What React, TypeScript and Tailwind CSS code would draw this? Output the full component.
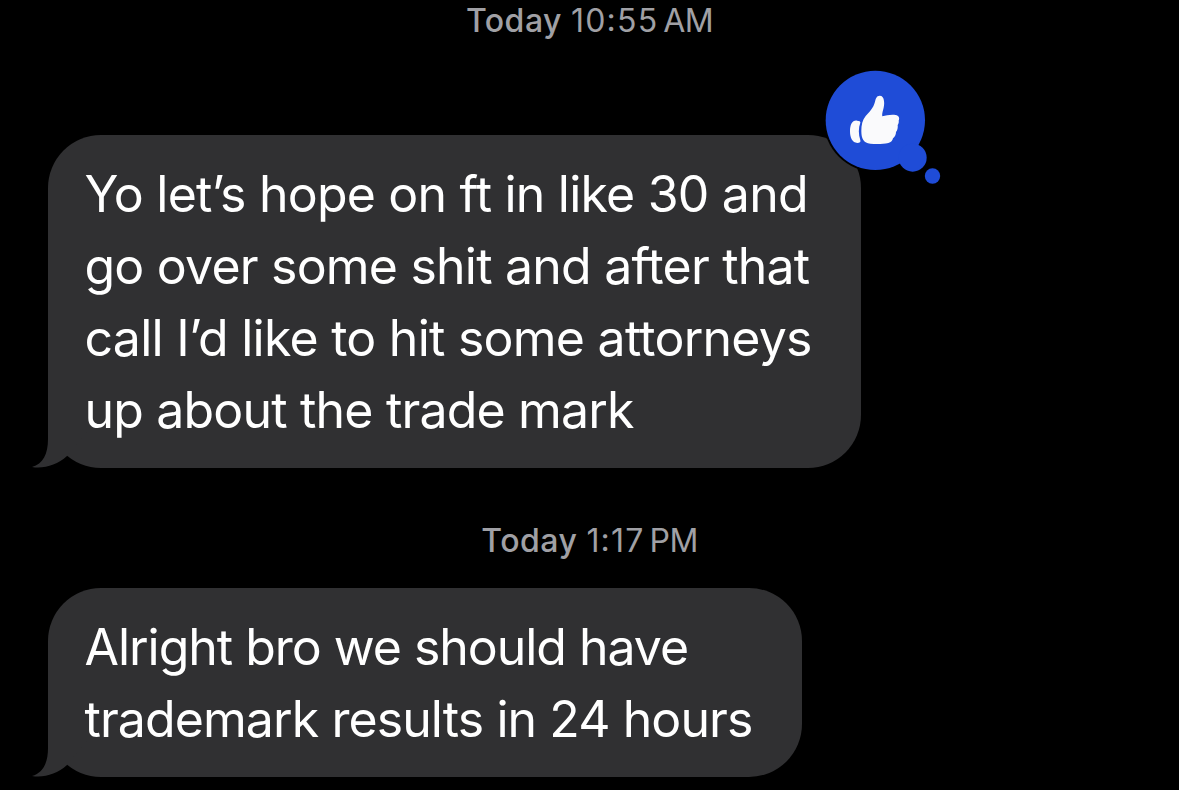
import { ReactNode } from "react";
import clsx from "clsx";

type Line = { text: string; spacing: string }

const firstMessage: Line[] = [
  { text: "Yo let’s hope on ft in like 30 and", spacing: "tracking-[-0.78px]" },
  { text: "go over some shit and after that", spacing: "tracking-[-0.79px]" },
  { text: "call I’d like to hit some attorneys", spacing: "tracking-[-0.75px]" },
  { text: "up about the trade mark", spacing: "tracking-[-0.82px]" },
]

const secondMessage: Line[] = [
  { text: "Alright bro we should have", spacing: "tracking-[-1.03px]" },
  { text: "trademark results in 24 hours", spacing: "tracking-[-0.91px]" },
]

type TimestampProps = {
  day: string
  hour: string
  minute: string
  period: string
  className?: string
}

const Timestamp = ({ day, hour, minute, period, className }: TimestampProps) => (
  <div className={clsx("flex h-10 items-center justify-center whitespace-nowrap text-[32px] leading-10 text-[#a0a0a5]", className)}>
    <span className="mr-[9px] font-medium tracking-[0.5px]">{day}</span>
    <span className="mr-[5px] tracking-[1.2px]">
      {hour}
      <span className="relative -top-px">:</span>
      {minute}
    </span>
    <span className="tracking-[-0.6px]">{period}</span>
  </div>
)

const Tail = () => (
  <svg className="absolute bottom-0 -left-4 h-[53px] w-[70px]" viewBox="0 0 70 53" fill="#303032">
    <path d="M16 0V24C16 39 11 49 0 52C12 54 25 50 35 41L69 0Z" />
  </svg>
)

const ThumbsUp = () => (
  <svg className="absolute -top-[75px] -right-[99px] h-[140px] w-[150px]" viewBox="0 0 450 420">
    <circle cx="196" cy="181" r="155" fill="#000" />
    <g fill="#1f4cd7">
      <circle cx="196" cy="181" r="149" />
      <circle cx="308" cy="293" r="42" />
      <circle cx="367.5" cy="348" r="23" />
    </g>
    <g fill="#fafafc">
      <path d="M141 182C127 180 120 194 120 214C120 234 127 248 142 249C149 249 153 246 151 241C145 223 145 203 151 188C152 184 148 182 141 182Z" />
      <path d="M209 107C200 107 197 116 195 125C190 145 178 155 167 168C157 180 154 195 154 213C154 237 161 249 181 251C201 253 220 252 235 249C243 247 248 242 249 235C255 230 258 223 258 216C263 210 264 202 263 195C266 190 267 186 266 182C270 174 266 166 257 165C243 163 229 166 217 169C214 158 225 142 222 123C221 113 217 107 209 107Z" />
    </g>
  </svg>
)

const Bubble = ({ lines, className, children }: { lines: Line[], className?: string, children?: ReactNode }) => (
  <div className={clsx("relative ml-12 rounded-[53px] bg-[#303032] pl-[36.5px] pt-[23px] text-[50px] leading-[72px] text-white", className)}>
    <Tail />
    {lines.map((line) => (
      <p key={line.text} className="relative whitespace-nowrap">
        <span className={line.spacing}>{line.text}</span>
      </p>
    ))}
    {children}
  </div>
)

const App = () => {
  return (
    <main className="flex h-[790px] w-[1179px] flex-col overflow-hidden bg-black font-['Inter',sans-serif]">
      <Timestamp day="Today" hour="10" minute="55" period="AM" className="mt-px" />
      <Bubble lines={firstMessage} className="mt-[94px] h-[333px] w-[813px]">
        <ThumbsUp />
      </Bubble>
      <Timestamp day="Today" hour="1" minute="17" period="PM" className="mt-[53px]" />
      <Bubble lines={secondMessage} className="mt-[27px] h-[189px] w-[754px]" />
    </main>
  )
}

export default App
